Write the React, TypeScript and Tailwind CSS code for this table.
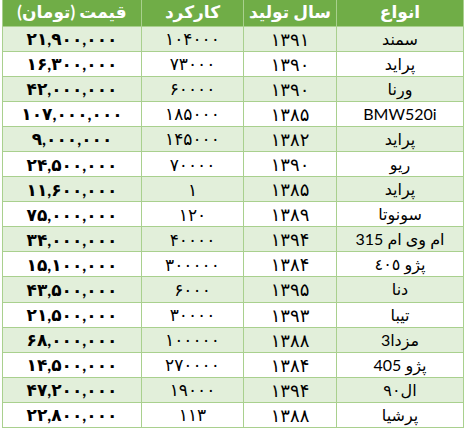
import type { ReactNode } from "react";

type Car = { name: string; year: string; km: string; price: string };

const cars: Car[] = [
  { name: "سمند", year: "۱۳۹۱", km: "۱۰۴۰۰۰", price: "۲۱,۹۰۰,۰۰۰" },
  { name: "پراید", year: "۱۳۹۰", km: "۷۳۰۰۰", price: "۱۶,۳۰۰,۰۰۰" },
  { name: "ورنا", year: "۱۳۹۰", km: "۶۰۰۰۰", price: "۴۲,۰۰۰,۰۰۰" },
  { name: "BMW520i", year: "۱۳۸۵", km: "۱۸۵۰۰۰", price: "۱۰۷,۰۰۰,۰۰۰" },
  { name: "پراید", year: "۱۳۸۲", km: "۱۴۵۰۰۰", price: "۹,۰۰۰,۰۰۰" },
  { name: "ریو", year: "۱۳۹۰", km: "۷۰۰۰۰", price: "۲۴,۵۰۰,۰۰۰" },
  { name: "پراید", year: "۱۳۸۵", km: "۱", price: "۱۱,۶۰۰,۰۰۰" },
  { name: "سونوتا", year: "۱۳۸۹", km: "۱۲۰", price: "۷۵,۰۰۰,۰۰۰" },
  { name: "ام وی ام 315", year: "۱۳۹۴", km: "۴۰۰۰۰", price: "۳۴,۰۰۰,۰۰۰" },
  { name: "پژو ٤٠٥", year: "۱۳۸۴", km: "۳۰۰۰۰۰", price: "۱۵,۱۰۰,۰۰۰" },
  { name: "دنا", year: "۱۳۹۵", km: "۶۰۰۰", price: "۴۳,۵۰۰,۰۰۰" },
  { name: "تیبا", year: "۱۳۹۳", km: "۳۰۰۰۰", price: "۲۱,۵۰۰,۰۰۰" },
  { name: "مزدا3", year: "۱۳۸۸", km: "۱۰۰۰۰۰", price: "۶۸,۰۰۰,۰۰۰" },
  { name: "پژو 405", year: "۱۳۸۴", km: "۲۷۰۰۰۰", price: "۱۴,۵۰۰,۰۰۰" },
  { name: "ال۹۰", year: "۱۳۹۴", km: "۱۹۰۰۰", price: "۴۷,۲۰۰,۰۰۰" },
  { name: "پرشیا", year: "۱۳۸۸", km: "۱۱۳", price: "۲۲,۸۰۰,۰۰۰" },
];

export default function App() {
  return (
    <div className="min-h-screen bg-white pl-[2px] font-['Lato','DejaVu_Sans',sans-serif]">
      <table dir="rtl" className="w-[461px] table-fixed border-collapse text-black">
        <colgroup>
          <col className="w-[127px]" />
          <col className="w-[93px]" />
          <col className="w-[102px]" />
          <col className="w-[139px]" />
        </colgroup>
        <thead>
          <tr className="h-[26px] bg-[#70ad47] text-white">
            <Th>انواع</Th>
            <Th>سال تولید</Th>
            <Th>کارکرد</Th>
            <Th>قیمت (تومان)</Th>
          </tr>
        </thead>
        <tbody>
          {cars.map((c, i) => (
            <tr key={i} className={i % 2 === 0 ? "bg-[#e2efda]" : "bg-white"}>
              <Td className="text-[16px]">{c.name}</Td>
              <Td className="text-[18px] tracking-[2px]">{c.year}</Td>
              <Td className="text-[17px] tracking-[2.5px]">{c.km}</Td>
              <Td className="text-[17px] font-bold tracking-[2px]">
                <span dir="ltr">{c.price}</span>
              </Td>
            </tr>
          ))}
        </tbody>
      </table>
    </div>
  );
}

function Th({ children }: { children: ReactNode }) {
  return (
    <th className="border-x border-[#a9d08e] p-0 pb-[3px] text-center align-middle text-[17px] font-bold leading-none">
      {children}
    </th>
  );
}

function Td({ children, className = "" }: { children: ReactNode; className?: string }) {
  return (
    <td className={"h-[25.1px] border border-[#a9d08e] p-0 text-center align-middle leading-none " + className}>
      {children}
    </td>
  );
}
